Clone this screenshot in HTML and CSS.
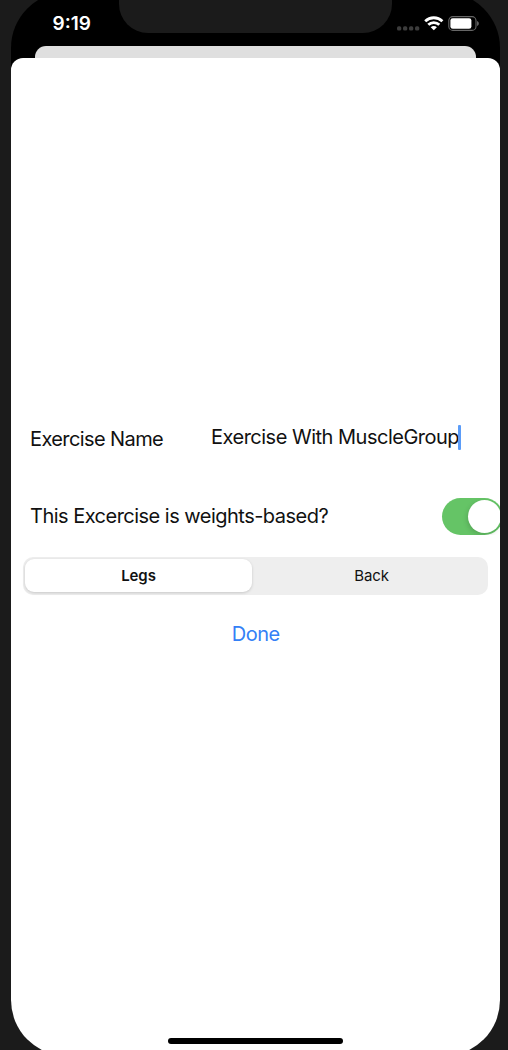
FILE: index.html
```html
<!DOCTYPE html>
<html lang="en">
<head>
<meta charset="utf-8">
<title>Exercise</title>
<link rel="stylesheet" href="styles.css">
</head>
<body>
<div class="device">
  <div class="screen">
    <header class="status">
      <span class="time">9:19</span>
      <div class="notch"></div>
      <div class="indicators">
        <svg class="signal" width="23" height="5" viewBox="0 0 23 5" fill="#3c3c3c"><rect x="0" y=".3" width="4.3" height="4.3" rx="1.6"/><rect x="6" y=".3" width="4.3" height="4.3" rx="1.6"/><rect x="12" y=".3" width="4.3" height="4.3" rx="1.6"/><rect x="18" y=".3" width="4.3" height="4.3" rx="1.6"/></svg>
        <svg class="wifi" width="20" height="15" viewBox="0 0 20 15" fill="none" stroke="#fff" stroke-width="2.8"><path d="M1.2 5.2a12.4 12.4 0 0 1 17.2 0"/><path d="M4.3 8.8a7.8 7.8 0 0 1 11 0"/><path d="M9.8 14.2 6.7 11.2a4.4 4.4 0 0 1 6.2 0Z" fill="#fff" stroke="none"/></svg>
        <svg class="battery" width="32" height="15" viewBox="0 0 32 15"><rect x=".8" y=".6" width="27.2" height="13.8" rx="4" fill="none" stroke="#666" stroke-width="1.1"/><rect x="2.4" y="2.2" width="21" height="10.6" rx="2.3" fill="#fff"/><path d="M29.2 5v5c2-.8 2-4.200 0-5Z" fill="#777"/></svg>
      </div>
    </header>
    <div class="sheet-behind"></div>
    <main class="sheet">
      <div class="name-row">
        <label class="name-label" for="name">Exercise Name</label>
        <div class="field" id="name"><span class="field-text">Exercise With MuscleGroup</span><i class="caret"></i></div>
      </div>
      <div class="toggle-row">
        <span class="toggle-label">This Excercise is weights-based?</span>
        <div class="toggle"><div class="knob"></div></div>
      </div>
      <div class="segments">
        <div class="segment selected"><span class="legs">Legs</span></div>
        <div class="segment back"><span>Back</span></div>
      </div>
      <div class="done"><span>Done</span></div>
      <div class="home"></div>
    </main>
  </div>
</div>
</body>
</html>
```
FILE: styles.css
```css
* { box-sizing: border-box; }
body { margin: 0; background: #1b1b1b; font-family: Inter, "Liberation Sans", sans-serif; color: #111; }
.device { width: 508px; height: 1050px; overflow: hidden; padding: 0 8px 0 11px; }
.screen { display: flex; flex-direction: column; width: 489px; height: 1064px; margin-top: -8px; padding-top: 8px; border-radius: 56px; background: #000; overflow: hidden; }
.status { display: flex; align-items: flex-start; height: 46px; flex: none; }
.time { width: 108px; padding: 12px 0 0 41.5px; font-size: 19px; line-height: 24px; font-weight: 600; color: #fff; white-space: nowrap; }
.notch { width: 273px; height: 33px; background: #1b1b1b; border-radius: 0 0 29px 29px; }
.indicators { display: flex; align-items: flex-start; padding: 16px 0 0 4.5px; }
.signal { margin-top: 9.5px; }
.wifi { margin-left: 4.5px; }
.battery { margin-left: 4px; }
.sheet-behind { flex: none; width: 441px; height: 12px; margin-left: 24px; border-radius: 11px 11px 0 0; background: #dfdfdf; }
.sheet { display: flex; flex-direction: column; flex: 1; background: #fff; border-radius: 12px 12px 0 0; padding-top: 366px; }
.name-row { display: flex; height: 30px; padding-left: 19px; font-size: 20px; line-height: 30px; white-space: nowrap; }
.name-label { width: 181px; letter-spacing: -.6px; }
.field { display: flex; margin-top: -2px; }
.field-text { width: 247px; letter-spacing: -.5px; }
.caret { width: 2.5px; height: 25px; margin-top: 3px; background: #5b9cf8; border-radius: 1px; }
.toggle-row { display: flex; height: 37px; margin-top: 44px; padding-left: 19px; font-size: 20px; line-height: 36px; white-space: nowrap; }
.toggle-label { width: 412px; flex: none; letter-spacing: -.52px; }
.toggle { flex: none; width: 61px; height: 37px; padding: 2px; border-radius: 19px; background: #65c466; }
.knob { width: 33px; height: 33px; margin-left: 24px; border-radius: 50%; background: #fff; box-shadow: -1px 2px 5px rgba(0,0,0,.15); clip-path: inset(-2px -2px -2px -12px); }
.segments { display: flex; width: 465px; height: 37.5px; margin: 22px 0 .5px 12px; padding: 2px; border-radius: 10px; background: #eee; }
.segment { flex: 1; font-size: 15px; line-height: 34px; text-align: center; letter-spacing: -.1px; }
.selected { flex: none; width: 227px; height: 33px; background: #fff; border-radius: 9px; font-weight: 600; box-shadow: 0 1px 3px rgba(0,0,0,.16); }
.back { padding-left: 5px; }
.done { margin-top: 23.5px; padding-left: .5px; text-align: center; font-size: 20px; line-height: 30px; letter-spacing: -.5px; color: #3380f6; }
.home { width: 175px; height: 6px; margin: 389.5px 0 0 157px; border-radius: 3px; background: #000; }
```
